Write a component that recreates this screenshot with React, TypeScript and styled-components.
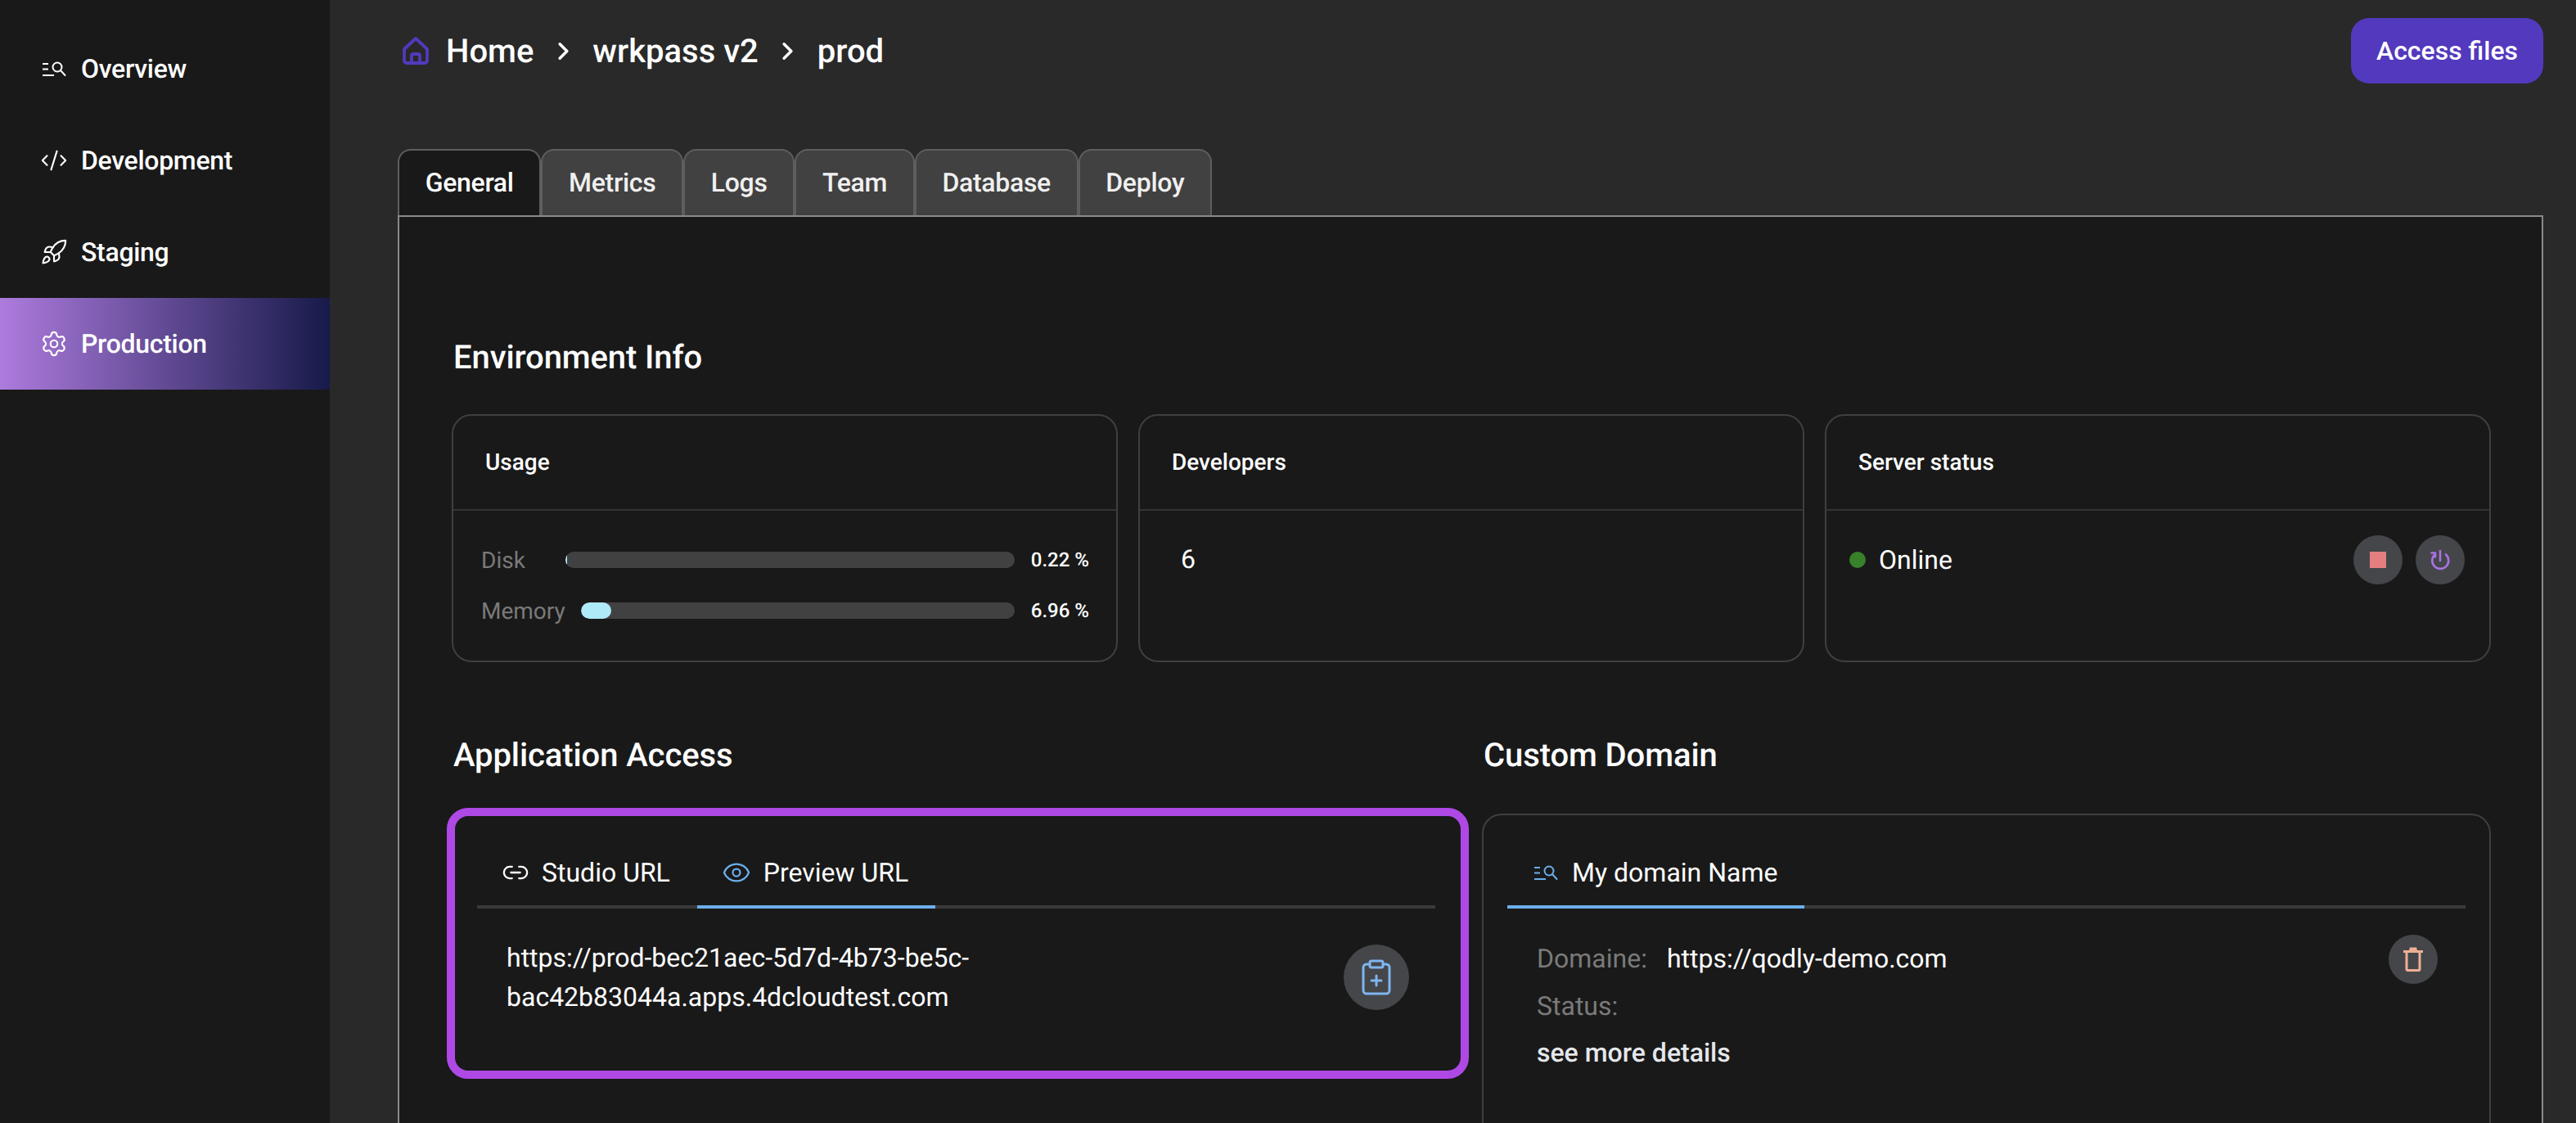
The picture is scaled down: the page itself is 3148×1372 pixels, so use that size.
import React from 'react';
import styled, { createGlobalStyle } from 'styled-components';
import { ChevronRight, ClipboardPlus, CodeXml, Eye, Link2, Rocket, Settings } from 'lucide-react';

const GlobalStyle = createGlobalStyle`
  html, body {
    margin: 0;
    padding: 0;
    background: #292929;
  }
  * {
    box-sizing: border-box;
  }
  body {
    text-rendering: geometricPrecision;
  }
`;

const OverviewIcon = ({ color = 'currentColor' }: { color?: string }) => (
  <svg width="34" height="34" viewBox="-3 -3 34 34" fill="none" stroke={color} strokeWidth="2">
    <path d="M0 8h7M0 14.5h7M0 22h14" />
    <circle cx="18" cy="12" r="5.5" />
    <path d="M22 16l5.5 6" strokeLinecap="round" />
  </svg>
);

const HomeIcon = () => (
  <HomeSvg width="32" height="34" viewBox="0 0 32 34" fill="none" stroke="#5339bd" strokeWidth="3.8" strokeLinejoin="round">
    <path d="M16 2L30 15v14a3 3 0 0 1-3 3H5a3 3 0 0 1-3-3V15z" />
    <path d="M11 32V23a2 2 0 0 1 2-2h6a2 2 0 0 1 2 2v9" />
  </HomeSvg>
);

const RestartIcon = () => (
  <svg width="28" height="28" viewBox="0 0 28 28" fill="none" stroke="#a873e0" strokeWidth="2.6" strokeLinecap="round" strokeLinejoin="round">
    <path d="M14 3v12" />
    <path d="M7.5 7.5a10 10 0 1 0 13.5 0" />
    <path d="M3.5 5.5h4.5v5" />
  </svg>
);

const TrashIcon = () => (
  <svg width="24" height="30" viewBox="0 0 24 30" fill="none">
    <path d="M0 7V4h7l1-3.5h8L17 4h7v3z" fill="#edb096" />
    <path d="M4 7v20a1.5 1.5 0 0 0 1.5 1.5h13A1.5 1.5 0 0 0 20 27V7" stroke="#edb096" strokeWidth="3" />
  </svg>
);

const navItems = [
  { label: 'Overview', icon: <OverviewIcon /> },
  { label: 'Development', icon: <CodeXml size={34} strokeWidth={1.5} /> },
  { label: 'Staging', icon: <Rocket size={34} strokeWidth={1.5} /> },
  { label: 'Production', icon: <Settings size={34} strokeWidth={1.5} />, active: true },
];

const tabs = ['General', 'Metrics', 'Logs', 'Team', 'Database', 'Deploy'];

const usage = [
  { label: 'Disk', value: 0.22 },
  { label: 'Memory', value: 6.96 },
];

const App = () => {
  return (
    <Page>
      <GlobalStyle />
      <Sidebar>
        {navItems.map((item) => (
          <NavItem key={item.label} $active={item.active}>
            {item.icon}
            {item.label}
          </NavItem>
        ))}
      </Sidebar>
      <Main>
        <Header>
          <Breadcrumb>
            <HomeIcon />
            <Crumb>Home</Crumb>
            <ChevronRight size={35} strokeWidth={2.4} />
            <Crumb>wrkpass v2</Crumb>
            <ChevronRight size={35} strokeWidth={2.4} />
            <Crumb>prod</Crumb>
          </Breadcrumb>
          <AccessButton>Access files</AccessButton>
        </Header>

        <TabBar>
          {tabs.map((tab, index) => (
            <Tab key={tab} $active={index === 0}>
              {tab}
            </Tab>
          ))}
        </TabBar>

        <Panel>
          <SectionTitle>Environment Info</SectionTitle>
          <CardRow>
            <Card>
              <CardHeader>Usage</CardHeader>
              <UsageBody>
                {usage.map((row) => (
                  <UsageRow key={row.label}>
                    <UsageLabel>{row.label}</UsageLabel>
                    <Bar>
                      <BarFill style={{ width: `${row.value}%` }} />
                    </Bar>
                    <UsageValue>{row.value} %</UsageValue>
                  </UsageRow>
                ))}
              </UsageBody>
            </Card>
            <Card>
              <CardHeader>Developers</CardHeader>
              <DevelopersBody>6</DevelopersBody>
            </Card>
            <Card>
              <CardHeader>Server status</CardHeader>
              <StatusBody>
                <StatusDot />
                <StatusText>Online</StatusText>
                <RoundButton>
                  <StopSquare />
                </RoundButton>
                <RoundButton>
                  <RestartIcon />
                </RoundButton>
              </StatusBody>
            </Card>
          </CardRow>

          <AccessGrid>
            <AccessColumn>
              <SectionTitle>Application Access</SectionTitle>
              <HighlightBox>
                <InnerTabs>
                  <InnerTab>
                    <Link2 size={34} strokeWidth={1.6} />
                    Studio URL
                  </InnerTab>
                  <InnerTab $active>
                    <Eye size={36} strokeWidth={1.5} color="#6caeea" />
                    Preview URL
                  </InnerTab>
                </InnerTabs>
                <UrlRow>
                  <UrlText>
                    https://prod-bec21aec-5d7d-4b73-be5c-
                    <br />
                    bac42b83044a.apps.4dcloudtest.com
                  </UrlText>
                  <RoundButton $large>
                    <ClipboardPlus size={48} strokeWidth={1.5} color="#7fb5ee" />
                  </RoundButton>
                </UrlRow>
              </HighlightBox>
            </AccessColumn>
            <DomainColumn>
              <SectionTitle>Custom Domain</SectionTitle>
              <DomainCard>
                <InnerTabs>
                  <InnerTab $active>
                    <OverviewIcon color="#6caeea" />
                    My domain Name
                  </InnerTab>
                </InnerTabs>
                <DomainBody>
                  <DomainDetails>
                    <DomainLine>
                      <DomainLabel>Domaine:</DomainLabel>
                      <DomainValue>https://qodly-demo.com</DomainValue>
                    </DomainLine>
                    <DomainLine>
                      <DomainLabel>Status:</DomainLabel>
                    </DomainLine>
                    <DetailsLink>see more details</DetailsLink>
                  </DomainDetails>
                  <RoundButton>
                    <TrashIcon />
                  </RoundButton>
                </DomainBody>
              </DomainCard>
            </DomainColumn>
          </AccessGrid>
        </Panel>
      </Main>
    </Page>
  );
};

export default App;

const Page = styled.div`
  display: flex;
  width: 100%;
  height: 100vh;
  overflow: hidden;
  background: #292929;
  color: #fff;
  font-family: Roboto, 'Liberation Sans', sans-serif;
`;

const Sidebar = styled.nav`
  flex: 0 0 403px;
  padding-top: 28px;
  background: #191919;
`;

const NavItem = styled.div<{ $active?: boolean }>`
  display: flex;
  align-items: center;
  gap: 19px;
  height: 112px;
  padding-left: 52px;
  font-size: 32px;
  font-weight: 500;
  letter-spacing: -0.3px;
  background: ${(p) =>
    p.$active ? 'linear-gradient(90deg, #ad7bde 0%, #171a4a 100%)' : 'transparent'};

  svg {
    margin: 0 -3px;
  }
`;

const Main = styled.main`
  flex: 1;
  min-width: 0;
  padding: 22px 40px 0 83px;
`;

const Header = styled.header`
  display: flex;
  align-items: center;
  justify-content: space-between;
  height: 80px;
`;

const Breadcrumb = styled.div`
  display: flex;
  align-items: center;
  gap: 18.5px;
`;

const HomeSvg = styled.svg`
  margin: 0 2.5px 0 6px;
`;

const Crumb = styled.span`
  font-size: 40px;
  font-weight: 500;
`;

const AccessButton = styled.button`
  width: 235px;
  height: 80px;
  border: 0;
  border-radius: 22px;
  background: #5339bd;
  color: #fff;
  font-family: inherit;
  font-size: 32px;
  font-weight: 500;
`;

const TabBar = styled.div`
  display: flex;
  margin-top: 80px;
`;

const Tab = styled.div<{ $active?: boolean }>`
  height: 81px;
  padding: 0 31.7px;
  line-height: 79px;
  font-size: 32px;
  font-weight: 500;
  letter-spacing: -0.3px;
  color: ${(p) => (p.$active ? '#fff' : '#f0f0f0')};
  background: ${(p) => (p.$active ? '#191919' : '#414141')};
  border: 2px solid #5e5e5e;
  border-bottom: 0;
  border-radius: 16px 16px 0 0;
`;

const Panel = styled.section`
  height: 1200px;
  padding: 144px 62px 0 64px;
  background: #191919;
  border: 2px solid #8a8a8a;
`;

const SectionTitle = styled.h2`
  margin: 0 0 0 2px;
  font-size: 40px;
  line-height: 56px;
  font-weight: 500;
  letter-spacing: -0.1px;
`;

const CardRow = styled.div`
  display: grid;
  grid-template-columns: repeat(3, 1fr);
  gap: 25px;
  margin-top: 41px;
`;

const Card = styled.div`
  height: 303px;
  border: 2px solid #3f3f3f;
  border-radius: 24px;
`;

const CardHeader = styled.div`
  height: 116px;
  padding-left: 39px;
  line-height: 114px;
  font-size: 28px;
  font-weight: 500;
  border-bottom: 2px solid #333;
`;

const UsageBody = styled.div`
  display: flex;
  flex-direction: column;
  gap: 20px;
  padding: 39px 33px 0 34px;
`;

const UsageRow = styled.div`
  display: flex;
  align-items: center;
  gap: 20px;
  height: 42px;
`;

const UsageLabel = styled.span`
  min-width: 103px;
  margin-right: -20px;
  padding-right: 19px;
  font-size: 28px;
  color: #7a7a7a;
`;

const Bar = styled.div`
  flex: 1;
  height: 20px;
  border-radius: 10px;
  background: #414141;
  overflow: hidden;
`;

const BarFill = styled.div`
  height: 100%;
  min-width: 2px;
  border-radius: 10px;
  background: #aeeaf7;
`;

const UsageValue = styled.span`
  flex: 0 0 70px;
  font-size: 24px;
  font-weight: 500;
  white-space: nowrap;
`;

const DevelopersBody = styled.div`
  padding: 40px 0 0 50px;
  font-size: 32px;
`;

const StatusBody = styled.div`
  display: flex;
  align-items: center;
  gap: 16px;
  padding: 30px 30px 0 28px;
`;

const StatusDot = styled.span`
  width: 20px;
  height: 20px;
  border-radius: 50%;
  background: #38812a;
`;

const StatusText = styled.span`
  flex: 1;
  font-size: 32px;
`;

const RoundButton = styled.div<{ $large?: boolean }>`
  display: flex;
  align-items: center;
  justify-content: center;
  flex: none;
  width: ${(p) => (p.$large ? 80 : 60)}px;
  height: ${(p) => (p.$large ? 80 : 60)}px;
  border-radius: 50%;
  background: #45464a;
`;

const StopSquare = styled.span`
  width: 20px;
  height: 20px;
  background: #e57f7f;
`;

const AccessGrid = styled.div`
  display: flex;
  align-items: flex-start;
  gap: 16px;
  margin-top: 86px;
`;

const AccessColumn = styled.div`
  flex: 0 0 1243px;
`;

const DomainColumn = styled.div`
  flex: 1;
`;

const HighlightBox = styled.div`
  height: 331px;
  margin: 36px 0 0 -6px;
  padding: 25px 31px 0 27px;
  border: 10px solid #af49e6;
  border-radius: 26px;
`;

const InnerTabs = styled.div`
  display: flex;
  height: 88px;
  border-bottom: 4px solid #3a3a3a;
`;

const InnerTab = styled.div<{ $active?: boolean }>`
  display: flex;
  align-items: center;
  gap: 18px;
  height: 88px;
  padding: 4px 33px 0;
  font-size: 32px;
  white-space: nowrap;
  border-bottom: 4px solid ${(p) => (p.$active ? '#6caeea' : 'transparent')};

  svg {
    margin: 0 -3px;
  }
`;

const UrlRow = styled.div`
  display: flex;
  align-items: center;
  justify-content: space-between;
  padding: 36px 32px 0 36px;
`;

const UrlText = styled.div`
  font-size: 32px;
  line-height: 48px;
`;

const DomainCard = styled.div`
  height: 500px;
  margin-top: 43px;
  padding: 26px 29px 0;
  border: 2px solid #3f3f3f;
  border-radius: 24px;
`;

const DomainBody = styled.div`
  display: flex;
  justify-content: space-between;
  padding: 32px 34px 0 36px;
`;

const DomainDetails = styled.div`
  display: flex;
  flex-direction: column;
`;

const DomainLine = styled.div`
  display: flex;
  align-items: center;
  gap: 24px;
  height: 58px;
`;

const DomainLabel = styled.span`
  font-size: 32px;
  color: #7a7a7a;
`;

const DomainValue = styled.span`
  font-size: 32px;
`;

const DetailsLink = styled.a`
  margin-top: 9px;
  font-size: 32px;
  font-weight: 500;
  color: #e5e7eb;
`;
